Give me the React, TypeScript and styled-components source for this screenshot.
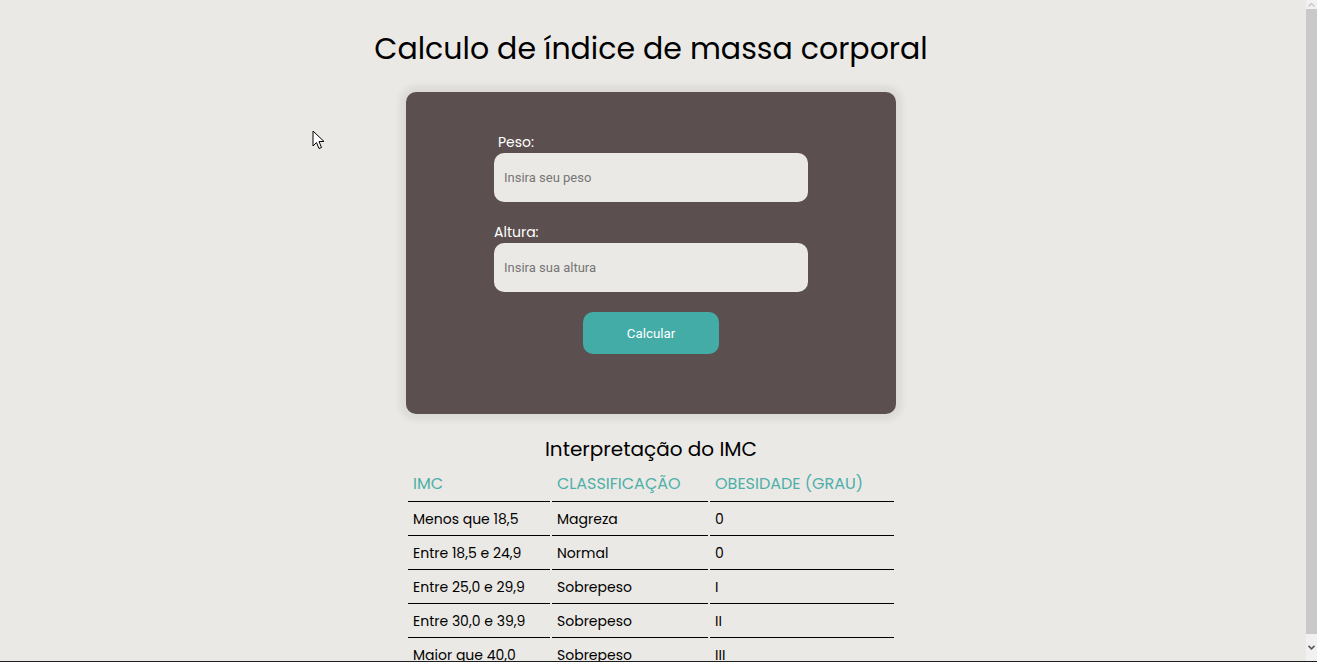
import React from "react";
import styled, { createGlobalStyle } from "styled-components";

const GlobalStyle = createGlobalStyle`
  html, body {
    margin: 0;
    padding: 0;
    background: #ebe9e5;
    overflow: hidden;
  }
  body {
    font-family: "Poppins", Inter, "Noto Sans", sans-serif;
    color: #000;
  }
  * { box-sizing: border-box; }
`;

const Frame = styled.div`
  display: flex;
  flex-direction: column;
  height: 662px;
`;

const Window = styled.div`
  flex: 1;
  display: flex;
  min-height: 0;
`;

const Viewport = styled.div`
  flex: 1;
  overflow: hidden;
  position: relative;
`;

const ScrollBar = styled.div`
  width: 15px;
  padding-left: 4px;
  display: flex;
  flex-direction: column;
  background: #ebe9e5;
`;

const ScrollButton = styled.div<{ $h: number }>`
  height: ${(p) => p.$h}px;
  background: #f1f1f1;
  display: flex;
  align-items: center;
  justify-content: center;
`;

const Thumb = styled.div`
  flex: 1;
  background: #c9c9c9;
`;

const BottomEdge = styled.div`
  height: 1px;
  background: #1e1e1e;
`;

const Page = styled.main`
  display: flex;
  flex-direction: column;
  align-items: center;
`;

const Title = styled.h1`
  margin: 25px 0 19px;
  font-size: 30px;
  line-height: 48px;
  font-weight: 400;
`;

const Card = styled.section`
  width: 490px;
  background: #5b504f;
  border-radius: 10px;
  box-shadow: 0 0 7px 6px rgba(0, 0, 0, 0.065);
  padding: 40px 0 60px;
  display: flex;
  flex-direction: column;
  align-items: center;
`;

const Form = styled.form`
  width: 314px;
  display: flex;
  flex-direction: column;
  align-items: stretch;
`;

const Field = styled.div`
  display: flex;
  flex-direction: column;
  margin-bottom: 20px;
`;

const Label = styled.label<{ $indent?: number }>`
  color: #fff;
  font-size: 14px;
  line-height: 21px;
  padding-left: ${(p) => p.$indent ?? 0}px;
`;

const Input = styled.input`
  height: 49px;
  border: none;
  outline: none;
  border-radius: 10px;
  background: #ebe9e5;
  padding: 0 10px;
  font-family: Roboto, Arial, sans-serif;
  font-size: 13px;
  color: #333;
  &::placeholder { color: #767676; }
`;

const Button = styled.button`
  align-self: center;
  width: 136px;
  height: 42px;
  border: none;
  border-radius: 10px;
  background: #44aca7;
  color: #fff;
  font-family: Roboto, Arial, sans-serif;
  font-size: 13.3px;
  font-weight: 400;
  cursor: pointer;
`;

const Subtitle = styled.h2`
  margin: 21px 0 0;
  font-size: 20px;
  line-height: 28px;
  font-weight: 400;
`;

const Table = styled.table`
  width: 490px;
  border-spacing: 2px;
  table-layout: fixed;
  font-size: 14px;
`;

const HeadCell = styled.th<{ $w: number }>`
  width: ${(p) => p.$w}px;
  text-align: left;
  font-weight: 400;
  font-size: 16px;
  line-height: 26px;
  color: #4dafa9;
  text-transform: uppercase;
  padding: 6px 5px 4px;
  border-bottom: 1px solid #000;
`;

const Cell = styled.td`
  padding: 5px;
  line-height: 21px;
  border-bottom: 1px solid #000;
`;

const Cursor = styled.svg`
  position: absolute;
  left: 312px;
  top: 130px;
  pointer-events: none;
`;

const rows: [string, string, string][] = [
  ["Menos que 18,5", "Magreza", "0"],
  ["Entre 18,5 e 24,9", "Normal", "0"],
  ["Entre 25,0 e 29,9", "Sobrepeso", "I"],
  ["Entre 30,0 e 39,9", "Sobrepeso", "II"],
  ["Maior que 40,0", "Sobrepeso", "III"],
];

export default function App() {
  return (
    <>
      <GlobalStyle />
      <Frame>
        <Window>
          <Viewport>
            <Page>
              <Title>Calculo de índice de massa corporal</Title>
              <Card>
                <Form onSubmit={(e) => e.preventDefault()}>
                  <Field>
                    <Label htmlFor="peso" $indent={4}>Peso:</Label>
                    <Input id="peso" placeholder="Insira seu peso" />
                  </Field>
                  <Field>
                    <Label htmlFor="altura">Altura:</Label>
                    <Input id="altura" placeholder="Insira sua altura" />
                  </Field>
                  <Button type="submit">Calcular</Button>
                </Form>
              </Card>
              <Subtitle>Interpretação do IMC</Subtitle>
              <Table>
                <thead>
                  <tr>
                    <HeadCell $w={142}>IMC</HeadCell>
                    <HeadCell $w={156}>Classificação</HeadCell>
                    <HeadCell $w={184}>Obesidade (grau)</HeadCell>
                  </tr>
                </thead>
                <tbody>
                  {rows.map((r) => (
                    <tr key={r[0]}>
                      <Cell>{r[0]}</Cell>
                      <Cell>{r[1]}</Cell>
                      <Cell>{r[2]}</Cell>
                    </tr>
                  ))}
                </tbody>
              </Table>
            </Page>
            <Cursor width="14" height="20" viewBox="0 0 14 20">
              <path d="M1 1 L1 16 L4.5 12.5 L7 18.5 L9.5 17.5 L7 11.5 L12 11.5 Z" fill="#fff" stroke="#000" strokeWidth="1" />
            </Cursor>
          </Viewport>
          <ScrollBar>
            <ScrollButton $h={9}>
              <svg width="7" height="4" viewBox="0 0 7 4">
                <path d="M0.5 3.5 L3.5 0.5 L6.5 3.5" fill="none" stroke="#c4c4c4" strokeWidth="1.2" />
              </svg>
            </ScrollButton>
            <Thumb />
            <ScrollButton $h={27}>
              <svg width="7" height="5" viewBox="0 0 7 5">
                <path d="M0.5 0.8 L3.5 3.8 L6.5 0.8" fill="none" stroke="#5a5a5a" strokeWidth="1.6" />
              </svg>
            </ScrollButton>
          </ScrollBar>
        </Window>
        <BottomEdge />
      </Frame>
    </>
  );
}
